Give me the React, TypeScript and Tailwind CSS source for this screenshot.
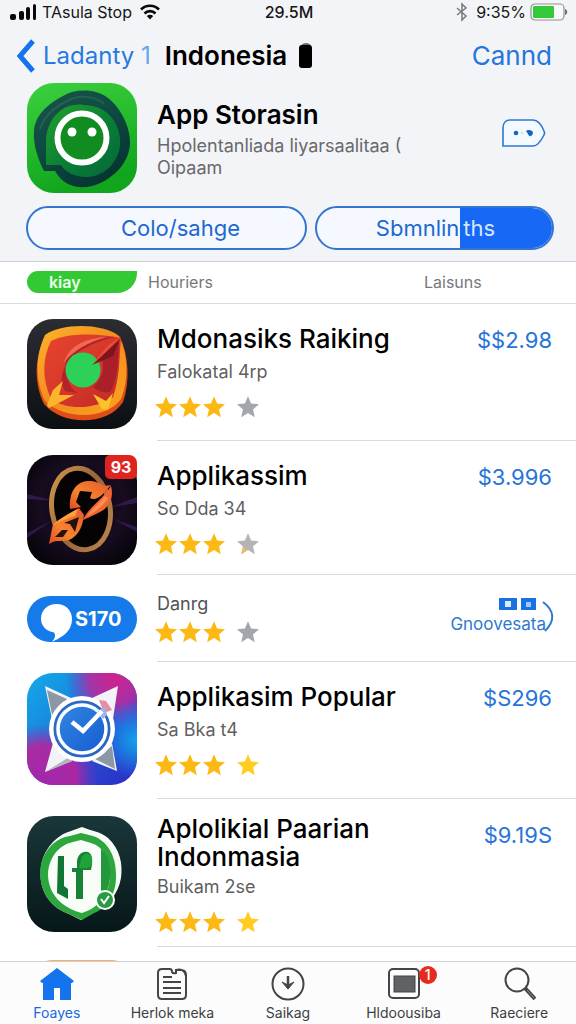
import type { ReactNode } from 'react';

const STAR = 'M12 1.2l3.1 7.3 7.9.7-6 5.2 1.8 7.8L12 18.1l-6.8 4.1L7 14.4 1 9.2l7.9-.7z';

function Stars({ last }: { last: 'grey' | 'partial' | 'gold' }) {
  const fill = last === 'gold' ? '#ffcc1f' : last === 'partial' ? '#b4b4b4' : '#a3a6ad';
  return (
    <div className="-ml-[3px] flex items-center" role="img" aria-label={last === 'gold' ? '4 stars' : '3 stars'}>
      {[0, 1, 2].map((i) => (
        <svg key={i} viewBox="0 0 24 24" className="size-6">
          <path d={STAR} fill="#fdb913" />
        </svg>
      ))}
      <svg viewBox="0 0 24 24" className="ml-[10px] size-6">
        <path d={STAR} fill={fill} />
        {last === 'partial' && <path d="M7 14.400L11.500 18.400L5.200 22.200z" fill="#e5c15c" />}
      </svg>
    </div>
  );
}

function MaskIcon() {
  return (
    <svg viewBox="0 0 110 110" className="block h-[110px] w-full">
      <defs>
        <linearGradient id="mask-bg" x1="0" y1="0" x2="0.3" y2="1">
          <stop offset="0" stopColor="#3bd03f" />
          <stop offset="0.5" stopColor="#27bd2d" />
          <stop offset="1" stopColor="#10a51d" />
        </linearGradient>
        <linearGradient id="mask-hood" x1="0" y1="0" x2="0.6" y2="1">
          <stop offset="0" stopColor="#1b544b" />
          <stop offset="0.5" stopColor="#0d4b40" />
          <stop offset="1" stopColor="#063632" />
        </linearGradient>
        <linearGradient id="mask-in" x1="0" y1="0" x2="1" y2="1">
          <stop offset="0" stopColor="#21a02e" />
          <stop offset="0.6" stopColor="#087a36" />
          <stop offset="1" stopColor="#06683a" />
        </linearGradient>
      </defs>
      <rect width="110" height="110" rx="27" fill="url(#mask-bg)" />
      <path d="M7 48C8 33 20 21 36 13C49 5 70 6 81 15C94 25 104 45 103 62C101 83 83 98 65 103C50 107 36 102 28 88H17C11 76 6 62 7 48z" fill="url(#mask-hood)" />
      <path d="M13 46C17 33 28 24 40 18C53 11 68 13 77 21" fill="none" stroke="#347264" strokeWidth="2" opacity="0.5" />
      <path d="M19 82V58C20 34 37 19 57 22C77 22 91 36 93 55C95 76 79 94 59 94C48 94 38 89 34 82z" fill="url(#mask-in)" />
      <circle cx="55" cy="55" r="24.500" fill="#118c20" stroke="#fff" strokeWidth="6" />
      <circle cx="45" cy="49" r="4.500" fill="#fff" />
      <circle cx="65" cy="49" r="4.500" fill="#fff" />
    </svg>
  );
}

function ShieldIcon() {
  return (
    <svg viewBox="0 0 110 110" className="block h-[110px] w-full">
      <defs>
        <linearGradient id="sh-bg" x1="0" y1="0" x2="0" y2="1">
          <stop offset="0" stopColor="#2c2d32" />
          <stop offset="1" stopColor="#0b0f14" />
        </linearGradient>
        <linearGradient id="sh-gold" x1="0" y1="0" x2="1" y2="1">
          <stop offset="0" stopColor="#fbb52a" />
          <stop offset="0.5" stopColor="#f58b1f" />
          <stop offset="1" stopColor="#f9a61e" />
        </linearGradient>
        <linearGradient id="sh-red" x1="0" y1="0" x2="1" y2="1">
          <stop offset="0" stopColor="#e8452f" />
          <stop offset="1" stopColor="#c22a26" />
        </linearGradient>
      </defs>
      <rect width="110" height="110" rx="26" fill="url(#sh-bg)" />
      <path d="M18 19C34 6 75 5 93 18C102 37 103 63 96 83C81 107 35 107 17 85C7 65 7 39 18 19z" fill="#df4d16" />
      <path d="M18 16C35 4 75 4 92 17C101 36 102 60 94 80C79 101 37 101 18 82C8 62 8 37 18 16z" fill="url(#sh-gold)" />
      <path d="M24 22C40 14 70 14 94 19C92 40 93 58 86 78C70 90 40 92 24 80C15 60 15 40 24 22z" fill="url(#sh-red)" />
      <path d="M38 48C40 30 56 19 88 18C66 23 50 32 44 40C37 52 40 66 50 74L38 72C33 64 34 56 38 48z" fill="#b2222a" />
      <path d="M37 44C41 28 57 19 80 18C62 23 46 31 37 44z" fill="#f16a50" />
      <path d="M92 22C91 40 92 56 84 72C80 75 72 73 66 68C77 58 78 46 74 39z" fill="#a91f2a" />
      <circle cx="56" cy="51" r="17.500" fill="#2ed158" />
      <path d="M93 20L86 37L65 46L75 37z" fill="#7d1420" />
      <path d="M94 18L66 45L73 36C78 29 84 23 94 18z" fill="#ed4c35" />
      <path d="M36 62L32 76L47 76L22 89L20 86L26 71z" fill="#fbb42b" />
      <path d="M66 75L79 82L86 74L81 91L75 90z" fill="#ffc12a" />
    </svg>
  );
}

function RingIcon() {
  return (
    <div className="relative">
      <svg viewBox="0 0 110 110" className="block h-[110px] w-full">
        <defs>
          <radialGradient id="ring-bg" cx="0.5" cy="0.45" r="0.7">
            <stop offset="0" stopColor="#0a0509" />
            <stop offset="0.55" stopColor="#170c20" />
            <stop offset="1" stopColor="#030205" />
          </radialGradient>
          <linearGradient id="ring-gold" x1="0" y1="0" x2="1" y2="1">
            <stop offset="0" stopColor="#d69b4c" />
            <stop offset="0.5" stopColor="#96653a" />
            <stop offset="1" stopColor="#c08a4b" />
          </linearGradient>
          <linearGradient id="ring-fire" x1="0" y1="1" x2="1" y2="0">
            <stop offset="0" stopColor="#e44c23" />
            <stop offset="0.4" stopColor="#f6842e" />
            <stop offset="1" stopColor="#e9572c" />
          </linearGradient>
        </defs>
        <rect width="110" height="110" rx="26" fill="url(#ring-bg)" />
        <path d="M0 39L28 46L0 44zM110 42L84 52L110 48zM0 78L24 66L0 83zM110 72L86 64L110 77z" fill="#44236a" opacity="0.6" />
        <ellipse cx="54" cy="54" rx="29" ry="41" fill="#060304" stroke="url(#ring-gold)" strokeWidth="5" transform="rotate(-10 54 54)" />
        <path d="M43 54C42 38 48 27 61 26C68 26 74 28 77 31L84 30L76 39C71 44 66 45 63 43L65 37L53 36L49 47L54 52z" fill="url(#ring-fire)" />
        <path d="M84 31C87 42 83 52 73 57C68 60 62 62 56 65C61 53 74 46 84 31z" fill="#ef6632" />
        <path d="M78 41C72 49 65 54 60 61C69 57 77 50 81 43z" fill="#ff8d51" />
        <path d="M22 89L26 69C34 63 43 58 52 53L57 60C56 70 52 81 42 85C36 87 29 84 22 89z" fill="url(#ring-fire)" />
        <path d="M28 82L35 75L41 75L36 82zM37 68L52 62L48 77L43 69z" fill="#24100d" />
        <path d="M26 70C35 62 43 58 51 54L48 61C40 64 33 66 26 70z" fill="#ffa03d" />
      </svg>
      <span className="absolute top-0 right-0 flex h-6 w-8 items-center justify-center rounded-[5px] rounded-tr-lg bg-[#df231f] text-base font-bold text-white">
        93
      </span>
    </div>
  );
}

function ChatPill() {
  return (
    <div className="flex h-[46px] items-center rounded-full bg-[#167bea] pl-[14px]">
      <svg viewBox="0 0 31 40" className="mt-2 h-10 w-[31px] shrink-0">
        <path d="M15.500 1C24 1 31 7 31 15.500C31 29 21 34 11 39C14 35 15 32 13 29.500C5 28 0 23 0 15.500C0 7 7 1 15.500 1z" fill="#fff" />
      </svg>
      <span className="ml-[3px] text-xl font-bold text-white">S170</span>
    </div>
  );
}

function ClockIcon() {
  return (
    <svg viewBox="0 0 110 112" className="block h-28 w-full">
      <defs>
        <linearGradient id="ck-bg" x1="0" y1="0" x2="1" y2="1">
          <stop offset="0" stopColor="#16a9e8" />
          <stop offset="0.35" stopColor="#1688df" />
          <stop offset="0.65" stopColor="#294bd2" />
          <stop offset="1" stopColor="#2d2bc4" />
        </linearGradient>
        <radialGradient id="ck-pink" cx="0.8" cy="0.05" r="0.45">
          <stop offset="0" stopColor="#d0228d" />
          <stop offset="0.5" stopColor="#b52ba0" stopOpacity="0.9" />
          <stop offset="1" stopColor="#7c2fc0" stopOpacity="0" />
        </radialGradient>
        <radialGradient id="ck-pink2" cx="0.15" cy="0.95" r="0.5">
          <stop offset="0" stopColor="#a127ad" />
          <stop offset="0.6" stopColor="#b8249b" stopOpacity="0.9" />
          <stop offset="1" stopColor="#7c2fc0" stopOpacity="0" />
        </radialGradient>
        <radialGradient id="ck-cyan" cx="1" cy="0.6" r="0.35">
          <stop offset="0" stopColor="#12a3ee" />
          <stop offset="1" stopColor="#12a3ee" stopOpacity="0" />
        </radialGradient>
        <linearGradient id="ck-face" x1="0" y1="0" x2="1" y2="1">
          <stop offset="0" stopColor="#348be4" />
          <stop offset="1" stopColor="#1557cf" />
        </linearGradient>
      </defs>
      <rect width="110" height="112" rx="26" fill="url(#ck-bg)" />
      <rect width="110" height="112" rx="26" fill="url(#ck-pink)" />
      <rect width="110" height="112" rx="26" fill="url(#ck-pink2)" />
      <rect width="110" height="112" rx="26" fill="url(#ck-cyan)" />
      <path d="M18 13L44 25L25 46zM91 13L65 25L86 46zM18 99L26 70L45 88zM90 98L65 88L85 70z" fill="#f2f3f6" />
      <path d="M20 17L40 26L25 42zM88 96L68 86L85 73z" fill="#8d98a5" />
      <path d="M18 99L44 83L45 88z" fill="#b1b5bd" />
      <circle cx="55" cy="56" r="33" fill="#fff" />
      <circle cx="55" cy="56" r="27.500" fill="url(#ck-face)" stroke="#2f66ba" strokeWidth="2" />
      <circle cx="55" cy="56" r="24" fill="none" stroke="#fff" strokeWidth="3.500" />
      <path d="M72 27L79 28L85 37L77 40z" fill="#e98ba4" />
      <path d="M70 39L78 33L80 42L76 46z" fill="#9bb3e6" />
      <path d="M45 49L56 58L75 38" fill="none" stroke="#fff" strokeWidth="4.500" />
    </svg>
  );
}

function LeafIcon() {
  return (
    <svg viewBox="0 0 110 116" className="block h-[116px] w-full">
      <defs>
        <linearGradient id="lf-bg" x1="0" y1="0" x2="0" y2="1">
          <stop offset="0" stopColor="#1a3739" />
          <stop offset="1" stopColor="#071719" />
        </linearGradient>
      </defs>
      <rect width="110" height="116" rx="27" fill="url(#lf-bg)" />
      <path d="M55 11C64 15 73 15 81 22C93 33 96 48 94 62C91 79 80 91 66 97L54 104L42 98C22 91 11 73 14 51C16 34 29 19 44 15z" fill="#f5fcf5" />
      <path d="M13 55C15 35 28 22 43 20L54 17L66 20C81 25 89 41 89 58C90 82 76 94 67 97L55 104L42 98C23 91 13 76 13 55z" fill="#2da63d" />
      <path d="M21 58C22 41 32 29 46 26L54 24L64 27C77 31 83 43 83 59C83 78 73 91 55 97C35 92 21 78 21 58z" fill="#f8fdf8" />
      <path d="M74 33C81 38 84 48 83 62C82 72 79 79 74 84z" fill="#23983a" />
      <path d="M31 40H37V70L41 73V83L30 77z" fill="#117535" />
      <path d="M45 52H50V45C51 38 56 35 61 36C66 38 66 46 64 54H56V83H49V56H45z" fill="#168236" />
      <path d="M54 43C57 35 65 36 65 44C66 51 61 53 52 52z" fill="#20a339" />
      <circle cx="78" cy="84" r="10" fill="#fff" />
      <circle cx="78" cy="84" r="8" fill="#279b43" />
      <path d="M74 83L77 87L82 80" fill="none" stroke="#fff" strokeWidth="2" />
    </svg>
  );
}

interface AppRowProps {
  icon: ReactNode;
  title: string;
  subtitle: string;
  price: string;
  stars: 'grey' | 'partial' | 'gold';
  pad: string;
  compact?: boolean;
}

function AppRow({ icon, title, subtitle, price, stars, pad, compact = false }: AppRowProps) {
  return (
    <li className="flex gap-5 pl-[27px]">
      <div className={`w-[110px] shrink-0 ${pad}`}>{icon}</div>
      <div className="flex min-w-0 flex-1 justify-between gap-2 border-b border-[#d9dadd] pr-6">
        <div className={`max-w-[250px] min-w-0 ${compact ? 'pt-4' : 'pt-[21px]'}`}>
          <h2 className="text-[26px] leading-7 font-medium text-black">{title}</h2>
          <p className={`pb-[11px] text-lg leading-6 text-[#5f5f62] ${compact ? 'pt-1' : 'pt-[7px]'}`}>{subtitle}</p>
          <Stars last={stars} />
        </div>
        <a href="#buy" className="pt-[22px] text-[22px] leading-7 text-[#2674d9]">
          {price}
        </a>
      </div>
    </li>
  );
}

function TabItem({ label, active = false, children }: { label: string; active?: boolean; children: ReactNode }) {
  return (
    <a
      href="#tab"
      aria-current={active ? 'page' : undefined}
      className={`flex flex-col items-center gap-px pt-1 text-sm leading-5 whitespace-nowrap ${active ? 'text-[#1769dc]' : 'text-[#3e3f42]'}`}
    >
      {children}
      <span>{label}</span>
    </a>
  );
}

export default function App() {
  return (
    <div className="flex h-screen flex-col overflow-hidden bg-white font-['Inter','Liberation_Sans',sans-serif]">
      <header className="shrink-0 border-b border-[#cfd0d3] bg-[#f3f4f7]">
        <div className="grid h-6 grid-cols-[1fr_auto_1fr] items-center pr-2 pl-[10px] text-base leading-6 text-[#161616]">
          <div className="flex items-center gap-1">
            <svg viewBox="0 0 28 18" className="h-[18px] w-7" fill="#090909">
              <rect x="0" y="11" width="6" height="6" rx="2" />
              <rect x="9" y="8" width="5" height="9" rx="2" />
              <rect x="16" y="4" width="4" height="13" rx="2" />
              <rect x="23" y="1" width="3" height="16" rx="1.500" />
            </svg>
            <span>TAsula Stop</span>
            <svg viewBox="0 0 20 16" className="ml-1 h-4 w-5" fill="none" stroke="#090909" strokeWidth="2.600">
              <path d="M1 5.500C6 .5 14 .5 19 5.500M4.500 9.500C7.500 6.300 12.500 6.300 15.500 9.500" />
              <path d="M6.800 12C8.800 10.300 11.200 10.300 13.200 12L10 15.500z" fill="#090909" stroke="none" />
            </svg>
          </div>
          <span className="font-medium">29.5M</span>
          <div className="flex items-center justify-end">
            <svg viewBox="0 0 12 20" className="mr-2 h-5 w-3" fill="none" stroke="#77797c" strokeWidth="1.500">
              <path d="M1 6l9 8-4 4V2l4 4-9 7" />
            </svg>
            <span>9:35%</span>
            <svg viewBox="0 0 38 18" className="ml-1 h-[18px] w-[38px]">
              <rect x="1" y="1" width="33" height="16" rx="4" fill="#fafafa" stroke="#8e9092" strokeWidth="1.200" />
              <rect x="3" y="3" width="21" height="12" rx="1" fill="#35c838" />
              <path d="M35 6C38 7 38 11 35 12z" fill="#6f7172" />
            </svg>
          </div>
        </div>

        <nav className="flex h-[59px] items-center pt-1 pr-6 pl-4">
          <a href="#back" className="flex items-center gap-[7px] text-2xl leading-8 text-[#2779df]">
            <svg viewBox="0 0 20 36" className="h-9 w-5">
              <path d="M17 3L4 18l13 15" fill="none" stroke="#1673ee" strokeWidth="5" />
            </svg>
            <span>
              Ladanty <span className="text-[#65a6ef]">1</span>
            </span>
          </a>
          <h1 className="ml-[14px] text-[26px] leading-8 font-semibold text-black">Indonesia</h1>
          <svg viewBox="0 0 14 27" className="ml-3 h-[27px] w-[14px]">
            <path d="M2 4C3 0 11 0 12 4z" fill="#6b6b6c" />
            <rect x="0" y="3" width="13" height="23" rx="3" fill="#000" />
          </svg>
          <button type="button" className="ml-auto text-[26px] leading-8 text-[#2575dc]">
            Cannd
          </button>
        </nav>

        <section className="flex gap-5 pr-[30px] pl-[27px]">
          <div className="w-[110px] shrink-0">
            <MaskIcon />
          </div>
          <div className="min-w-0 flex-1 pt-4">
            <h2 className="text-[26px] leading-8 font-semibold text-black">App Storasin</h2>
            <p className="max-w-[250px] pt-1 text-lg leading-[22px] text-[#68696c]">Hpolentanliada liyarsaalitaa ( Oipaam</p>
          </div>
          <button type="button" aria-label="More" className="mt-9 h-7 w-11 shrink-0">
            <svg viewBox="0 0 44 28" className="h-7 w-11">
              <path d="M8 1H31C37 1 40 7 42 12Q43 14 42 16C39 22 36 27 31 27H1V9C1 4 4 1 8 1z" fill="#f4f9ff" stroke="#2b79cf" strokeWidth="1.600" />
              <circle cx="14" cy="14" r="2.300" fill="#1663c7" />
              <circle cx="20" cy="14" r="1" fill="#bbd6f5" />
              <path d="M24 12C26 10 31 11 31 14C30 18 27 18 26 15z" fill="#1663c7" />
            </svg>
          </button>
        </section>

        <div className="grid grid-cols-[281fr_239fr] gap-2 pt-[13px] pr-[22px] pb-[11px] pl-[26px] text-[22px] leading-7">
          <button type="button" className="h-11 rounded-full border-2 border-[#3476ce] bg-[#f5f9ff] pl-7 text-[#2068cf]">
            Colo/sahge
          </button>
          <button type="button" className="flex h-11 overflow-hidden rounded-full border-2 border-[#3476ce] bg-[#f5f9ff]">
            <span className="flex h-full w-[61%] items-center justify-end pr-px text-[#2068cf]">Sbmnlin</span>
            <span className="flex h-full flex-1 items-center bg-[#1769f5] pl-[3px] text-[#d5e7ff]">ths</span>
          </button>
        </div>
      </header>

      <nav className="grid h-[42px] shrink-0 grid-cols-[110px_1fr_152px] items-center border-b border-[#d9dadd] pb-px pl-[27px] text-base text-[#77787b]">
        <a href="#all" className="flex h-[22px] items-center rounded-l-[11px] rounded-br-[20px] bg-[#33c934] pl-[22px] font-semibold text-[#eaffea]">
          kiay
        </a>
        <a href="#hot" className="pl-[11px]">Houriers</a>
        <a href="#latest">Laisuns</a>
      </nav>

      <main className="min-h-0 flex-1 overflow-hidden">
        <ul>
          <AppRow icon={<ShieldIcon />} title="Mdonasiks Raiking" subtitle="Falokatal 4rp" price="$$2.98" stars="grey" pad="pt-[15px] pb-3" />
          <AppRow icon={<RingIcon />} title="Applikassim" subtitle="So Dda 34" price="$3.996" stars="partial" pad="pt-[14px] pb-[10px]" />
          <li className="flex gap-5 pl-[27px]">
            <div className="w-[110px] shrink-0 pt-[21px] pb-5">
              <ChatPill />
            </div>
            <div className="flex min-w-0 flex-1 justify-between border-b border-[#d9dadd] pt-[17px] pr-6">
              <div>
                <h2 className="text-lg leading-6 text-[#505154]">Danrg</h2>
                <div className="pt-1">
                  <Stars last="grey" />
                </div>
              </div>
              <a href="#open" className="relative flex flex-col items-center gap-1 pt-[6px] pr-[6px] text-[17px] leading-5 text-[#2c79cf]">
                <svg viewBox="0 0 38 12" className="ml-10 h-3 w-[38px]">
                  <rect width="18" height="12" fill="#1972df" />
                  <rect x="22" width="15" height="12" fill="#1972df" />
                  <rect x="6" y="3" width="6" height="6" fill="#d9eafa" />
                  <rect x="27" y="4" width="5" height="5" fill="#9bcaf7" />
                </svg>
                <span>Gnoovesata</span>
                <svg viewBox="0 0 12 32" className="absolute top-2 -right-[2px] h-8 w-3">
                  <path d="M1 2C13 11 13 21 3 31" fill="none" stroke="#2c79cf" strokeWidth="2" />
                </svg>
              </a>
            </div>
          </li>
          <AppRow icon={<ClockIcon />} title="Applikasim Popular" subtitle="Sa Bka t4" price="$S296" stars="gold" pad="pt-[11px] pb-[14px]" />
          <AppRow icon={<LeafIcon />} title="Aplolikial Paarian Indonmasia" subtitle="Buikam 2se" price="$9.19S" stars="gold" pad="pt-[17px] pb-[15px]" compact />
          <li className="pt-[13px] pl-[27px]">
            <div className="h-[110px] w-[110px] rounded-[26px] bg-[#f9ad62]" />
          </li>
        </ul>
      </main>

      <nav className="h-[63px] shrink-0 border-t border-[#cfd0d3] bg-[#fcfcfd]">
        <div className="-mx-px grid grid-cols-5">
          <TabItem label="Foayes" active>
            <svg viewBox="0 0 34 36" className="h-9 w-[34px]">
              <path d="M17 2L34 15L32 17H31V34H20V22H14V34H3V17H2L0 15z" fill="#1673ee" />
            </svg>
          </TabItem>
          <TabItem label="Herlok meka">
            <svg viewBox="0 0 34 36" className="h-9 w-[34px]" fill="none" stroke="#444548" strokeWidth="2">
              <path d="M7 3H15Q17 3 17 6Q18 8 21 7V4H26Q31 4 31 9V29Q31 33 27 33H7Q3 33 3 29V7Q3 3 7 3zM21 4Q29 2 31 10" />
              <path d="M8 11H17M8 16H26M8 22H26M8 27H26" />
            </svg>
          </TabItem>
          <TabItem label="Saikag">
            <svg viewBox="0 0 34 36" className="h-9 w-[34px]" fill="none" stroke="#444548" strokeWidth="2">
              <circle cx="17" cy="18" r="15.500" />
              <path d="M17 10V22" strokeWidth="2.500" />
              <path d="M11 16L17 23L23 16L17 19z" fill="#444548" strokeWidth="1" />
            </svg>
          </TabItem>
          <TabItem label="Hldoousiba">
            <span className="relative">
              <svg viewBox="0 0 34 36" className="block h-9 w-[34px]">
                <rect x="2" y="3" width="30" height="29" rx="4" fill="none" stroke="#444548" strokeWidth="2" />
                <rect x="7" y="10" width="21" height="16" fill="#606265" stroke="#444548" />
              </svg>
              <span className="absolute top-0 -right-4 flex size-[18px] items-center justify-center rounded-full bg-[#e52b1f] text-sm font-medium text-white">
                1
              </span>
            </span>
          </TabItem>
          <TabItem label="Raeciere">
            <svg viewBox="0 0 34 36" className="h-9 w-[34px]" fill="none" stroke="#444548">
              <circle cx="15" cy="14" r="11.500" strokeWidth="2" />
              <path d="M23 22L33 33" strokeWidth="4" />
              <path d="M25 24L32 32" stroke="#898b8e" strokeWidth="1" />
            </svg>
          </TabItem>
        </div>
      </nav>
    </div>
  );
}
